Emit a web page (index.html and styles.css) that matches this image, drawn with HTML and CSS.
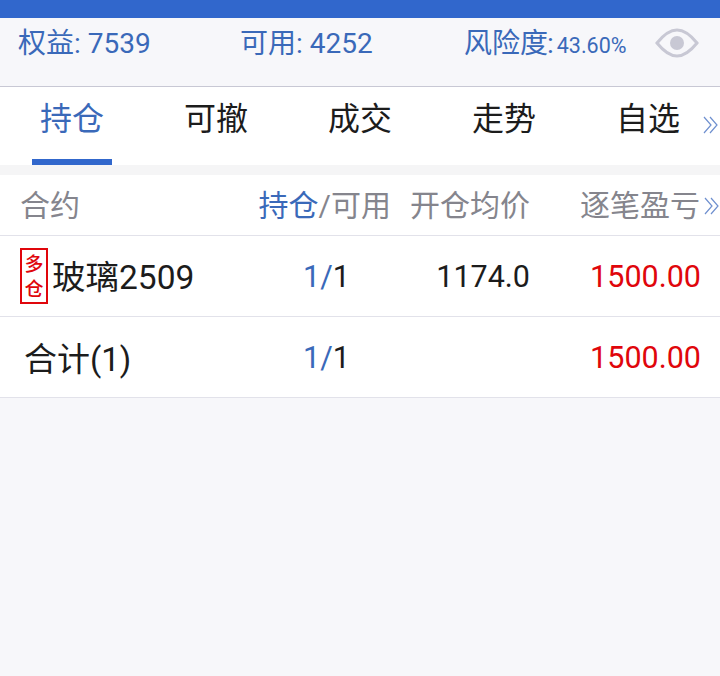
FILE: index.html
```html
<!DOCTYPE html>
<html lang="zh-CN">
<head>
<meta charset="UTF-8" />
<meta name="viewport" content="width=device-width, initial-scale=1.0" />
<title>持仓</title>
<link rel="stylesheet" href="styles.css">
</head>
<body>
  <div class="statusbar"></div>

  <div class="summary">
    <span class="sum-item sum-equity">权益: 7539</span>
    <span class="sum-item sum-avail">可用: 4252</span>
    <span class="sum-item sum-risk">风险度<span class="risk-colon">:</span> <span class="risk-num">43.60%</span></span>
    <svg class="eye" width="44" height="32" viewBox="0 0 44 32">
      <path d="M2 16 C10 6 16 3 22 3 C28 3 34 6 42 16 C34 26 28 29 22 29 C16 29 10 26 2 16 Z" fill="none" stroke="#c8c8d4" stroke-width="3"/>
      <circle cx="22" cy="16" r="7" fill="#c8c8d4"/>
    </svg>
  </div>

  <div class="tabs">
    <div class="tab tab-active">持仓</div>
    <div class="tab">可撤</div>
    <div class="tab">成交</div>
    <div class="tab">走势</div>
    <div class="tab">自选</div>
    <svg class="more more-tabs" width="16" height="18" viewBox="0 0 16 18">
      <path d="M1 1 L8 9 L1 17 M7 1 L14 9 L7 17" fill="none" stroke="#6f90cf" stroke-width="1.2"/>
    </svg>
  </div>

  <div class="table">
    <div class="row row-head">
      <div class="col-name">合约</div>
      <div class="col-pos"><span class="blue">持仓</span>/可用</div>
      <div class="col-price">开仓均价</div>
      <div class="col-pl">逐笔盈亏</div>
      <svg class="more more-head" width="16" height="18" viewBox="0 0 16 18">
        <path d="M1 1 L8 9 L1 17 M7 1 L14 9 L7 17" fill="none" stroke="#6f90cf" stroke-width="1.2"/>
      </svg>
    </div>
    <div class="row">
      <div class="col-name name-tagged"><span class="tag">多<br>仓</span><span class="name-text">玻璃2509</span></div>
      <div class="col-pos num"><span class="blue">1/</span>1</div>
      <div class="col-price num">1174.0</div>
      <div class="col-pl num red">1500.00</div>
    </div>
    <div class="row">
      <div class="col-name name-total">合计(1)</div>
      <div class="col-pos num"><span class="blue">1/</span>1</div>
      <div class="col-price num"></div>
      <div class="col-pl num red">1500.00</div>
    </div>
  </div>
</body>
</html>
```

FILE: styles.css
```css
body {
  margin: 0;
  background: #f7f7fa;
  font-family: Roboto, "Noto Sans CJK SC", sans-serif;
  color: #1c1c1c;
  overflow: hidden;
}
.statusbar {
  height: 18px;
  background: #3167cc;
}
.summary {
  height: 68px;
  display: flex;
  align-items: flex-start;
  padding-top: 6px;
  box-sizing: border-box;
  color: #3a69b9;
  font-size: 28px;
  line-height: 40px;
}
.sum-item {
  white-space: nowrap;
}
.sum-equity {
  margin-left: 18px;
  width: 222px;
}
.sum-avail {
  width: 224px;
}
.sum-risk {
  width: 191px;
}
.risk-colon {
  margin-right: -4px;
  margin-left: -1px;
}
.risk-num {
  font-size: 21.5px;
}
.eye {
  margin-top: 3px;
}
.tabs {
  height: 78px;
  background: #fff;
  border-top: 1px solid #c8c8d4;
  display: flex;
  position: relative;
}
.tab {
  width: 144px;
  flex: none;
  height: 78px;
  box-sizing: border-box;
  text-align: center;
  font-size: 32px;
  line-height: 64px;
}
.tab-active {
  color: #3a69b9;
  position: relative;
}
.tab-active::after {
  content: "";
  position: absolute;
  left: 32px;
  bottom: 0;
  width: 80px;
  height: 6px;
  background: #3167cc;
}
.more {
  position: absolute;
}
.more-tabs {
  right: 1px;
  top: 29px;
}
.more-head {
  right: 0;
  top: 22px;
}
.table {
  border-top: 10px solid #f5f5f6;
  background: #fff;
}
.row {
  height: 81px;
  box-sizing: border-box;
  border-bottom: 1px solid #e2e2ea;
  display: flex;
  align-items: center;
  font-size: 33px;
  position: relative;
}
.row-head {
  height: 61px;
  padding-top: 2px;
  font-size: 30px;
  line-height: 42px;
  color: #85858d;
}
.col-name {
  width: 220px;
  flex: none;
  padding-left: 20px;
  box-sizing: border-box;
  white-space: nowrap;
}
.name-tagged {
  display: flex;
  align-items: center;
  line-height: 40px;
}
.name-text {
  font-size: 33.5px;
  padding-top: 4px;
}
.name-total {
  padding-left: 24px;
}
.col-pos {
  width: 171px;
  flex: none;
  text-align: right;
  white-space: nowrap;
}
.col-pos.num {
  padding-right: 41px;
  box-sizing: border-box;
}
.col-price {
  width: 139px;
  flex: none;
  text-align: right;
  white-space: nowrap;
}
.col-pl {
  width: 170px;
  flex: none;
  text-align: right;
  white-space: nowrap;
}
.num {
  font-size: 30.5px;
}
.col-pl.num {
  width: 171px;
}
.tag {
  width: 28px;
  height: 56px;
  padding-top: 2px;
  box-sizing: border-box;
  border: 2px solid #e0060c;
  color: #e0060c;
  font-size: 19px;
  font-weight: 500;
  line-height: 25px;
  text-align: center;
  margin-right: 4px;
  flex: none;
}
.blue {
  color: #3a69b9;
}
.red {
  color: #e0060c;
}
```
